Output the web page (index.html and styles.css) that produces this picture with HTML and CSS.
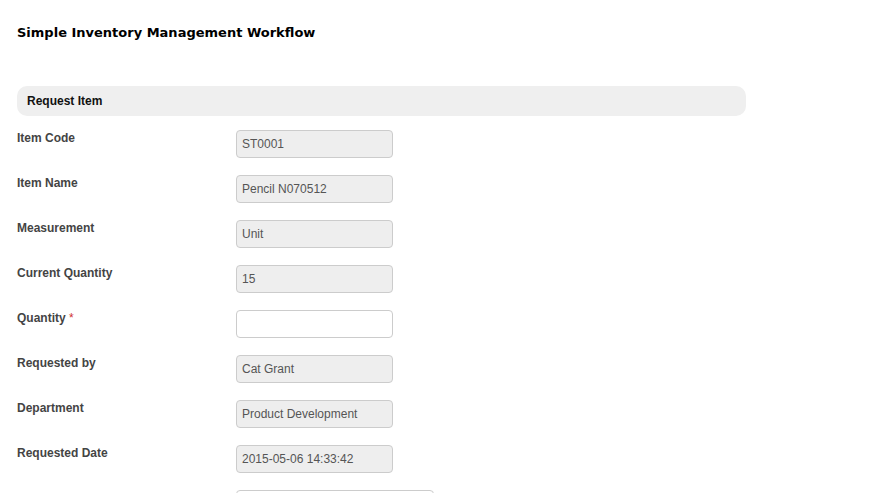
FILE: index.html
```html
<!DOCTYPE html>
<html>
<head>
<meta charset="utf-8">
<link rel="stylesheet" href="styles.css">
</head>
<body>
<div class="page">
  <h1 class="title">Simple Inventory Management Workflow</h1>
  <div class="section-head">Request Item</div>
  <div class="form">
    <div class="row"><div class="label">Item Code</div><div class="field ro">ST0001</div></div>
    <div class="row"><div class="label">Item Name</div><div class="field ro">Pencil N070512</div></div>
    <div class="row"><div class="label">Measurement</div><div class="field ro">Unit</div></div>
    <div class="row"><div class="label">Current Quantity</div><div class="field ro">15</div></div>
    <div class="row"><div class="label">Quantity <span class="req">*</span></div><div class="field"></div></div>
    <div class="row"><div class="label">Requested by</div><div class="field ro">Cat Grant</div></div>
    <div class="row"><div class="label">Department</div><div class="field ro">Product Development</div></div>
    <div class="row"><div class="label">Requested Date</div><div class="field ro">2015-05-06 14:33:42</div></div>
    <div class="row"><div class="label"></div><div class="field wide"></div></div>
  </div>
</div>
</body>
</html>
```

FILE: styles.css
```css
html, body { margin: 0; padding: 0; background: #fff; }
.page { padding: 25px 0 0 17px; width: 729px; }
.title {
  margin: 0;
  font-family: "DejaVu Sans", Verdana, sans-serif;
  font-weight: bold;
  font-size: 13px;
  line-height: 16px;
  color: #000;
}
.section-head {
  margin-top: 45px;
  height: 30px;
  line-height: 31px;
  background: #efefef;
  border-radius: 10px;
  padding-left: 10px;
  font-family: "Liberation Sans", Arial, sans-serif;
  font-weight: bold;
  font-size: 12px;
  color: #111;
}
.form { margin-top: 14px; }
.row { display: flex; align-items: flex-start; height: 45px; }
.label {
  width: 219px;
  padding-top: 1px;
  line-height: 15px;
  font-family: "Liberation Sans", Arial, sans-serif;
  font-weight: bold;
  font-size: 12px;
  color: #444;
}
.req { color: #d03030; font-weight: normal; }
.field {
  box-sizing: border-box;
  width: 157px;
  height: 28px;
  border: 1px solid #ccc;
  border-radius: 4px;
  background: #fff;
  padding-left: 5px;
  line-height: 26px;
  font-family: "Liberation Sans", Arial, sans-serif;
  font-size: 12px;
  color: #555;
}
.field.ro { background: #eee; }
.field.wide { width: 198px; }
```
